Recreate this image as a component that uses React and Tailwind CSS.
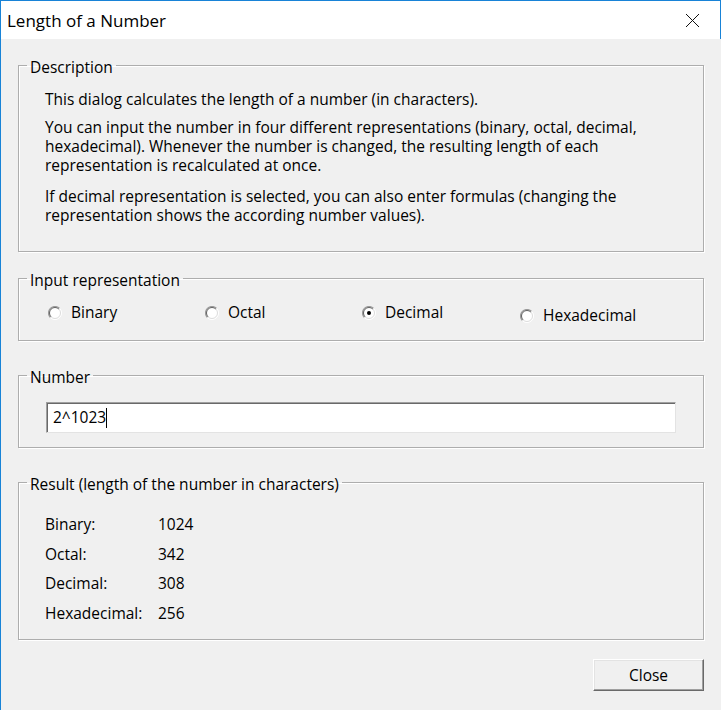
function Radio({ checked }) {
  return (
    <svg width="14" height="14" viewBox="0 0 14 14" className="shrink-0">
      <circle cx="7" cy="7" r="6.5" fill="#ffffff" />
      <path d="M2.4 11.6 A6.5 6.5 0 0 1 11.6 2.4" stroke="#9a9a9a" strokeWidth="1.2" fill="none" />
      <path d="M3.1 10.9 A5.5 5.5 0 0 1 10.9 3.1" stroke="#5f5f5f" strokeWidth="1" fill="none" />
      <path d="M11.6 2.4 A6.5 6.5 0 0 1 2.4 11.6" stroke="#ffffff" strokeWidth="1" fill="none" />
      <path d="M10.9 3.1 A5.5 5.5 0 0 1 3.1 10.9" stroke="#dcdcdc" strokeWidth="1" fill="none" />
      {checked && <circle cx="7" cy="7" r="2" fill="#000000" />}
    </svg>
  );
}

function Group({ label, className, children }) {
  return (
    <fieldset
      className={
        "border border-[#adadad] shadow-[inset_1px_1px_0_#ffffff,1px_1px_0_#ffffff] " +
        (className || "")
      }
    >
      <legend className="ml-[8px] px-[3px] h-[19px] leading-[22px]">{label}</legend>
      {children}
    </fieldset>
  );
}

export default function App() {
  const results = [
    ["Binary:", "1024"],
    ["Octal:", "342"],
    ["Decimal:", "308"],
    ["Hexadecimal:", "256"],
  ];

  return (
    <div
      className="w-[721px] h-[710px] flex flex-col bg-[#f0f0f0] border-l border-t border-[#1883d7] text-black text-[15.5px] leading-[19px]"
      style={{ fontFamily: '"Open Sans", "Noto Sans", sans-serif' }}
    >
      {/* title bar */}
      <div className="h-[38px] bg-white flex items-center justify-between pl-[6px] pr-[20px] border-r border-[#1883d7]">
        <span className="text-[17px]">Length of a Number</span>
        <svg width="15" height="15" viewBox="0 0 15 15">
          <path d="M1 1 L14 14 M14 1 L1 14" stroke="#111" strokeWidth="1" />
        </svg>
      </div>

      <div className="flex-1 flex flex-col pt-[17px] px-[17px]">
        <Group label="Description">
          <div className="pl-[26px] pr-[10px] pt-[15px] pb-[26px] whitespace-nowrap">
            <p>This dialog calculates the length of a number (in characters).</p>
            <p className="mt-[9px]">
              You can input the number in four different representations (binary, octal, decimal,
              <br />
              hexadecimal). Whenever the number is changed, the resulting length of each
              <br />
              representation is recalculated at once.
            </p>
            <p className="mt-[12px]">
              If decimal representation is selected, you can also enter formulas (changing the
              <br />
              representation shows the according number values).
            </p>
          </div>
        </Group>

        <Group label="Input representation" className="mt-[17px]">
          <div className="pl-[29px] pt-[15px] pb-[15px] grid grid-cols-[157px_157px_158px_157px] items-start">
            <label className="flex items-center gap-[9px]">
              <Radio />
              <span>Binary</span>
            </label>
            <label className="flex items-center gap-[9px]">
              <Radio />
              <span>Octal</span>
            </label>
            <label className="flex items-center gap-[9px]">
              <Radio checked />
              <span>Decimal</span>
            </label>
            <label className="flex items-center gap-[9px] mt-[3px]">
              <Radio />
              <span>Hexadecimal</span>
            </label>
          </div>
        </Group>

        <Group label="Number" className="mt-[25px]">
          <div className="px-[27px] pt-[17px] pb-[14px]">
            <div className="h-[31px] bg-white border border-t-[#a0a0a0] border-l-[#a0a0a0] border-b-[#e3e3e3] border-r-[#e3e3e3] shadow-[inset_1px_1px_0_#696969] flex items-center pl-[6px]">
              <span>2^1023</span>
              <span className="w-px h-[20px] bg-black" />
            </div>
          </div>
        </Group>

        <Group label="Result (length of the number in characters)" className="mt-[25px]">
          <div className="pl-[26px] pt-[23px] pb-[16px] grid grid-cols-[113px_1fr] gap-y-[10.7px]">
            {results.map(([k, v]) => (
              <div key={k} className="contents">
                <span>{k}</span>
                <span>{v}</span>
              </div>
            ))}
          </div>
        </Group>

        <div className="mt-[19px] flex justify-end">
          <button className="w-[111px] h-[32px] bg-[#f0f0f0] border border-t-white border-l-white border-b-[#696969] border-r-[#696969] shadow-[inset_-1px_-1px_0_#a0a0a0,inset_1px_1px_0_#e3e3e3]">
            Close
          </button>
        </div>
      </div>
    </div>
  );
}
